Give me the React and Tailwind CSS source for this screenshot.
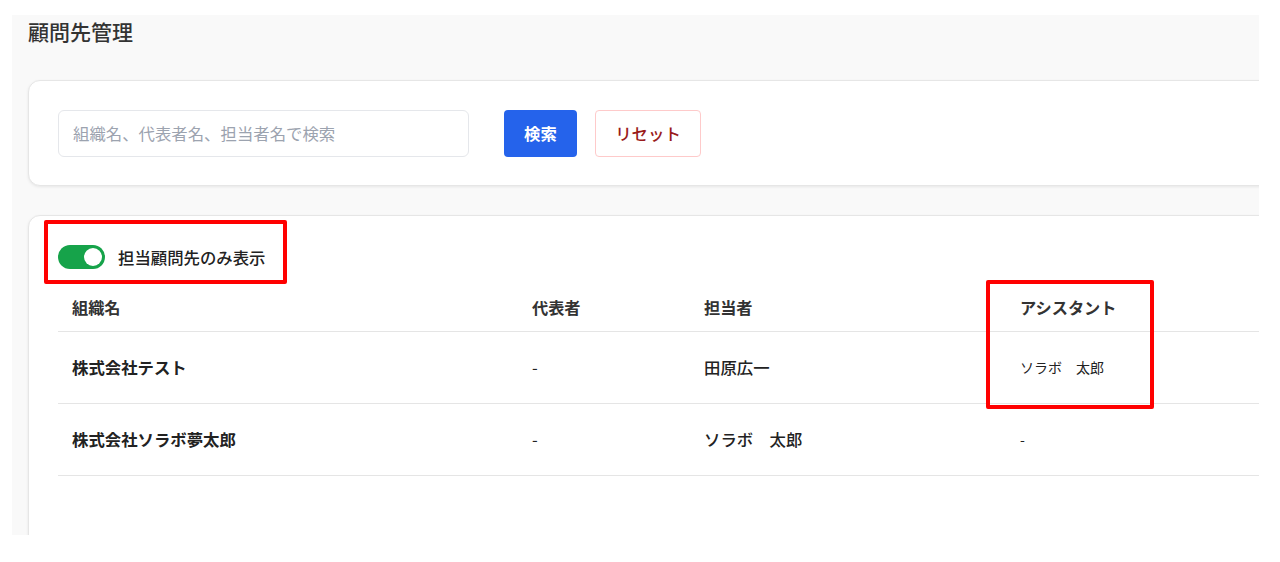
import React from "react";

const font = { fontFamily: '"Noto Sans CJK JP", "Noto Sans", sans-serif' };

export default function App() {
  return (
    <div className="w-full h-[562px] bg-white pt-[15px] pl-[12px]" style={font}>
      <div className="relative w-[1247px] h-[520px] bg-[#f9f9f9] overflow-hidden pl-[16px] pt-[2px]">
        <h1 className="text-[21px] leading-[28px] font-medium text-[#333]">顧問先管理</h1>

        <div className="mt-[35px] w-[1300px] h-[106px] bg-white rounded-[12px] border border-[#e6e6e6] shadow-[0_1px_3px_rgba(0,0,0,0.08)] flex items-center px-[29px]">
          <div className="w-[411px] h-[47px] rounded-[6px] border border-[#e5e7eb] flex items-center px-[14px]">
            <span className="text-[16.4px] text-[#9ca3af]">組織名、代表者名、担当者名で検索</span>
          </div>
          <button className="ml-[35px] w-[73px] h-[47px] rounded-[4px] bg-[#2563eb] text-white text-[16.4px] font-bold">検索</button>
          <button className="ml-[18px] w-[106px] h-[47px] rounded-[4px] border border-[#fecaca] bg-white text-[#991b1b] text-[16.4px] font-medium">リセット</button>
        </div>

        <div className="mt-[29px] w-[1300px] h-[400px] bg-white rounded-[12px] border border-[#e6e6e6] shadow-[0_1px_3px_rgba(0,0,0,0.08)] px-[29px] pt-[29px]">
          <div className="flex items-center h-[24px]">
            <div className="w-[47px] h-[24px] rounded-full bg-[#16a34a] flex items-center justify-end px-[3px]">
              <div className="w-[18px] h-[18px] rounded-full bg-white" />
            </div>
            <span className="ml-[13px] text-[16.4px] font-medium text-[#222]">担当顧問先のみ表示</span>
          </div>

          <div className="mt-[15px]">
            <div className="flex h-[48px] items-center border-b border-[#e5e5e5] text-[16.2px] font-bold text-[#333]">
              <div className="w-[460px] px-[14px]">組織名</div>
              <div className="w-[172px] px-[14px]">代表者</div>
              <div className="w-[316px] px-[14px]">担当者</div>
              <div className="px-[14px]">アシスタント</div>
            </div>
            <div className="flex h-[72px] items-center border-b border-[#e5e5e5] text-[16.4px] text-[#222]">
              <div className="w-[460px] px-[14px] font-bold">株式会社テスト</div>
              <div className="w-[172px] px-[14px]">-</div>
              <div className="w-[316px] px-[14px] font-medium">田原広一</div>
              <div className="px-[14px] text-[14px]">ソラボ　太郎</div>
            </div>
            <div className="flex h-[72px] items-center border-b border-[#e5e5e5] text-[16.4px] text-[#222]">
              <div className="w-[460px] px-[14px] font-bold">株式会社ソラボ夢太郎</div>
              <div className="w-[172px] px-[14px]">-</div>
              <div className="w-[316px] px-[14px] font-medium">ソラボ　太郎</div>
              <div className="px-[14px] text-[14px]">-</div>
            </div>
          </div>
        </div>

        <div className="absolute left-[32px] top-[205px] w-[243px] h-[64px] border-[4px] border-[#ff0000] rounded-[2px]" />
        <div className="absolute left-[974px] top-[265px] w-[168px] h-[129px] border-[4px] border-[#ff0000] rounded-[2px]" />
      </div>
    </div>
  );
}
